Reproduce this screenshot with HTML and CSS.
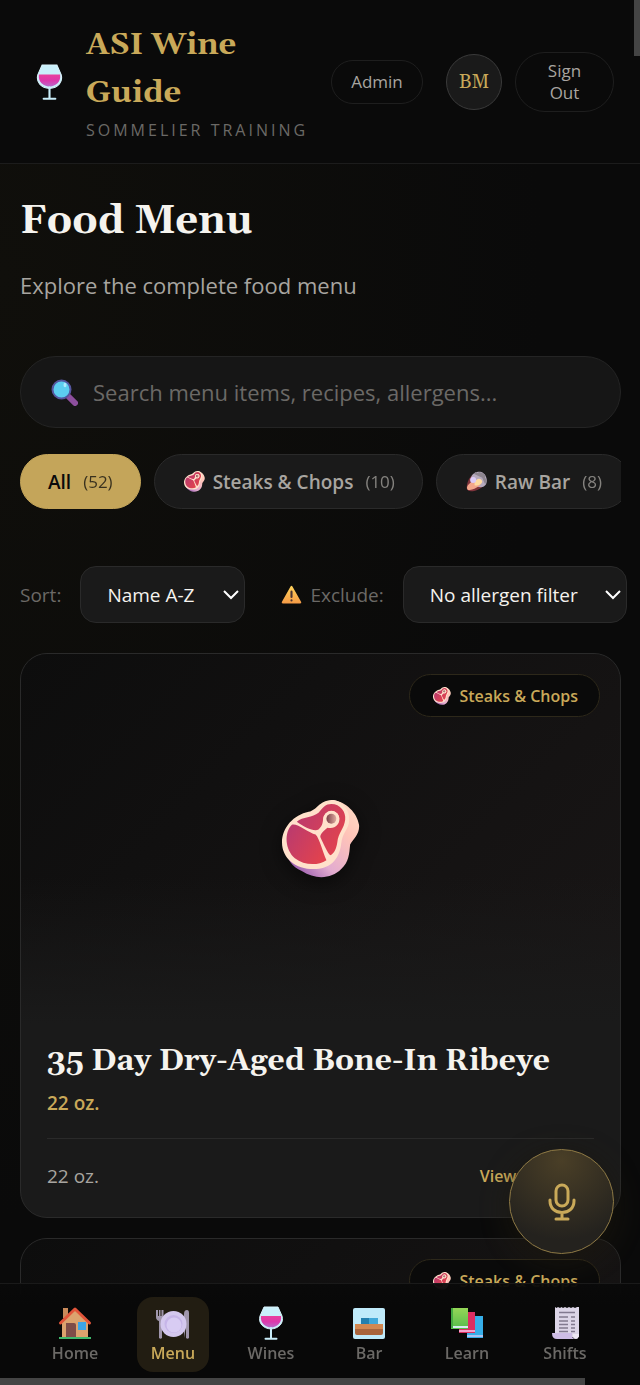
FILE: index.html
```html
<!DOCTYPE html>
<html lang="en">
<head>
  <meta charset="UTF-8">
  <meta name="viewport" content="width=device-width, initial-scale=1.0">
  <title>ASI Wine Guide - Food Menu</title>
  <link rel="stylesheet" href="styles.css">
</head>
<body>
  <!-- shared icons -->
  <svg class="sprite" aria-hidden="true">
    <defs>
      <linearGradient id="fatSide" x1="0" y1="1" x2="1" y2="0">
        <stop offset="0.1" stop-color="#9a5cae"/>
        <stop offset="0.35" stop-color="#e3acd0"/>
        <stop offset="0.7" stop-color="#ffc4b8"/>
        <stop offset="1" stop-color="#ffe0c8"/>
      </linearGradient>
      <linearGradient id="meat" x1="0" y1="0" x2="1" y2="0.6">
        <stop offset="0" stop-color="#b83a70"/>
        <stop offset="1" stop-color="#e0424f"/>
      </linearGradient>
      <linearGradient id="marrow" x1="0" y1="0" x2="1" y2="0">
        <stop offset="0" stop-color="#7b4048"/>
        <stop offset="1" stop-color="#e0aaa0"/>
      </linearGradient>
      <linearGradient id="wine" x1="0" y1="0" x2="0" y2="1">
        <stop offset="0" stop-color="#e9409f"/>
        <stop offset="0.5" stop-color="#dc38ac"/>
        <stop offset="1" stop-color="#b86acb"/>
      </linearGradient>
      <linearGradient id="green" x1="0" y1="0" x2="0" y2="1">
        <stop offset="0" stop-color="#95d657"/>
        <stop offset="1" stop-color="#55bd4c"/>
      </linearGradient>
      <linearGradient id="amber" x1="0" y1="0" x2="0" y2="1">
        <stop offset="0" stop-color="#ffd45c"/>
        <stop offset="1" stop-color="#f59a46"/>
      </linearGradient>
    </defs>
    <symbol id="steak" viewBox="11 10 79 79">
      <path fill="url(#fatSide)" d="M63 10C76 12 87 23 89 35C90 44 84 49 80 55C79 65 79 72 71 80C61 90 45 91 31 82C19 77 13 66 16 51Z"/>
      <path fill="#ffe1cb" d="M11 53C11 38 23 25 38 22C47 20 48 11 61 10C72 10 80 20 79 31C79 39 72 43 71 54C69 71 59 80 43 80C25 80 11 69 11 53Z"/>
      <path fill="url(#meat)" d="M26 32C32 27 42 28 48 23C53 17 55 14 61 14C70 14 76 22 75 30C74 39 68 43 67 53C66 59 64 64 60 66C57 64 53 54 50 48C49 45 53 41 57 38C64 40 70 35 69 28C68 20 57 19 53 27C52 32 53 35 48 40C43 42 34 38 26 32Z"/>
      <path fill="url(#meat)" d="M21 35C26 33 38 43 45 45C49 49 52 62 56 71C47 77 33 76 24 69C14 60 13 43 21 35Z"/>
      <circle cx="61" cy="29" r="8" fill="#ffe1cb"/>
      <circle cx="61" cy="29" r="5" fill="url(#marrow)"/>
    </symbol>
    <symbol id="glass" viewBox="0 0 24 34">
      <path fill="#c9f0fb" stroke="#d9f3fc" stroke-width="1" d="M5 1H19L23 10C25 17 20 22.500 12 23C4 22.500 -1 17 1 10Z"/>
      <path fill="url(#wine)" d="M2 10H22C23 17 18 21 12 21.500C6 21 1 17 2 10Z"/>
      <path fill="none" stroke="#c9edf9" stroke-width="2" stroke-linecap="round" d="M12 22V32M6.500 32.800H17.500"/>
    </symbol>
  </svg>

  <header class="header">
    <a class="brand" href="#">
      <svg class="brand-icon"><use href="#glass"/></svg>
      <span class="brand-text">
        <span class="brand-title">ASI Wine Guide</span>
        <span class="brand-sub">SOMMELIER TRAINING</span>
      </span>
    </a>
    <div class="header-actions">
      <button class="btn-ghost admin" type="button">Admin</button>
      <span class="avatar">BM</span>
      <button class="btn-ghost" type="button">Sign Out</button>
    </div>
  </header>

  <main class="page">
    <h1>Food Menu</h1>
    <p class="lead">Explore the complete food menu</p>

    <label class="search">
      <svg class="search-icon" viewBox="0 0 27 27">
        <path d="M17.500 17.500L24 24" stroke="#8d4f9d" stroke-width="6" stroke-linecap="round"/>
        <circle cx="10.500" cy="10.500" r="9" fill="#5ccdf0" stroke="#55569f" stroke-width="2"/>
        <ellipse cx="14" cy="6" rx="1.500" ry="2.200" fill="#aeeafd"/>
      </svg>
      <input type="text" aria-label="Search menu" placeholder="Search menu items, recipes, allergens...">
    </label>

    <div class="tabs">
      <button class="tab active" type="button">All <span class="count">(52)</span></button>
      <button class="tab" type="button">
        <svg class="icon"><use href="#steak"/></svg>Steaks &amp; Chops <span class="count">(10)</span>
      </button>
      <button class="tab" type="button">
        <svg class="icon" viewBox="0 0 22 22">
          <path fill="#7f343c" d="M1 19C0 14 3 7 7 4L20 13C18 18 9 22 3 21Z"/>
          <path fill="#b5a9bd" d="M5 8C6 2 12 0 16 1C21 3 23 9 21 14C18 19 11 17 7 13Z"/>
          <path fill="#8d858f" d="M8 3L10 1L12 2L14 1L17 2L20 4L20 7L22 10L20 14L17 7Z"/>
          <path fill="#f3a68a" d="M1 18C1 15 4 13 6 11C10 9 15 9 16 11C17 16 7 20 2 20Z"/>
          <path fill="#ffdb9f" d="M9 12C11 7 16 7 17 11C17 14 11 16 9 15Z"/>
          <circle cx="7.500" cy="9.500" r="3.200" fill="#dccbf7"/>
        </svg>Raw Bar <span class="count">(8)</span>
      </button>
    </div>

    <div class="filters">
      <div class="filter">
        <label for="sort">Sort:</label>
        <span class="select sort">
          <select id="sort"><option>Name A-Z</option><option>Name Z-A</option></select>
          <svg class="chevron" viewBox="0 0 16 10"><path d="M1 1L8 8L15 1"/></svg>
        </span>
      </div>
      <div class="filter">
        <label for="exclude">
          <svg class="icon" viewBox="0 0 22 22">
            <path fill="url(#amber)" d="M10 2.500Q11 1 12 2.500L21 18.500Q22 20 20 20.500H2Q0 20 1 18.500Z"/>
            <path fill="none" stroke="#4b3434" stroke-width="2.200" stroke-linecap="round" d="M11 8V13.500M11 17V17.200"/>
          </svg>Exclude:
        </label>
        <span class="select allergen">
          <select id="exclude"><option>No allergen filter</option><option>Dairy</option></select>
          <svg class="chevron" viewBox="0 0 16 10"><path d="M1 1L8 8L15 1"/></svg>
        </span>
      </div>
    </div>

    <div class="cards">
      <article class="card">
        <div class="card-image">
          <span class="badge"><svg class="badge-icon"><use href="#steak"/></svg>Steaks &amp; Chops</span>
          <svg class="card-icon"><use href="#steak"/></svg>
        </div>
        <div class="card-body">
          <h2>35 Day Dry-Aged Bone-In Ribeye</h2>
          <p class="price">22 oz.</p>
          <div class="card-footer">
            <span>22 oz.</span>
            <a href="#">View Details →</a>
          </div>
        </div>
      </article>
      <article class="card">
        <div class="card-image">
          <span class="badge"><svg class="badge-icon"><use href="#steak"/></svg>Steaks &amp; Chops</span>
        </div>
      </article>
    </div>
  </main>

  <button class="mic" type="button" aria-label="Voice assistant">
    <svg viewBox="0 0 28 38">
      <rect x="8" y="2" width="12" height="21" rx="6"/>
      <path d="M2 17V18C2 25 7 29.500 14 29.500C21 29.500 26 25 26 18V17M14 29.500V36M8 36H20"/>
    </svg>
  </button>

  <nav class="bottom-nav">
    <a href="#">
      <svg viewBox="0 0 34 34">
        <path fill="#c98a5a" d="M5 2H10V12H5Z"/>
        <path fill="#dca36e" d="M4 16L17 4L30 16V31H4Z"/>
        <path fill="#7f4d48" d="M8 17H16Q18 17 18 19V31H8Z"/>
        <path fill="#3ba4e6" d="M20 16H28V24H20Z"/>
        <path fill="none" stroke="#e2553a" stroke-width="3" stroke-linecap="round" stroke-linejoin="round" d="M2.500 17L17 3L31.500 17"/>
        <path fill="#3eb96b" d="M1 31H33V33H1Z"/>
      </svg>
      Home
    </a>
    <a href="#" class="active">
      <svg viewBox="0 0 34 34">
        <path fill="#a096ac" d="M0 4H2V10H3V4H4.500V10H5.500V4H7.500V12Q7.500 14 6 15V32Q4.500 33.500 3 32V15Q0 14 0 11Z"/>
        <path fill="#a096ac" d="M28 32V8Q28 4 31 4Q33 4 33 7V32Q31.500 33.500 30 32V20Z"/>
        <circle cx="17.500" cy="18" r="13" fill="#d4c8ee"/>
        <circle cx="17.500" cy="18" r="9" fill="#c6b5e8"/>
        <circle cx="18" cy="19" r="7.500" fill="#d8ccf3"/>
      </svg>
      Menu
    </a>
    <a href="#">
      <svg><use href="#glass"/></svg>
      Wines
    </a>
    <a href="#">
      <svg viewBox="0 0 34 34">
        <rect x="1" y="2" width="32" height="31" rx="2" fill="#bfeafa"/>
        <path fill="#a9643c" d="M3 18H31V27Q31 29 29 29H5Q3 29 3 27Z"/>
        <path fill="#d28851" d="M3 18H31V23H3Z"/>
        <path fill="#237fae" d="M9 12H18V18H9Z"/>
        <path fill="#42a8d8" d="M17 12H26V18H17Z"/>
      </svg>
      Bar
    </a>
    <a href="#">
      <svg viewBox="0 0 34 34">
        <path fill="#36aee9" d="M17 10H33V32H17Z"/>
        <path fill="#a9c2f4" d="M17 29H33V31H17Z"/>
        <path fill="#dc2e61" d="M9 6H25V27H9Z"/>
        <path fill="#f3a3ce" d="M9 24H25V26H9Z"/>
        <path fill="url(#green)" d="M1 2H18V23H1Z"/>
        <path fill="#d5edf0" d="M2 20H18V22H2Z"/>
        <path fill="#45aa42" d="M1 2H3V22H1Z"/>
      </svg>
      Learn
    </a>
    <a href="#">
      <svg viewBox="0 0 34 34">
        <path fill="#dcd5e7" d="M7 1L8.500 2L10 1L12 2L13.500 1L15 2L17 1L19 2L21 1L23 2L25 1L27 2L29 1L31 1V31H7Z"/>
        <path fill="#cdbce5" d="M4 27H24Q23 33 28 33H9Q4 33 4 27Z"/>
        <path fill="#eee8f5" d="M28 33Q31 33 31 28H25Q24 33 28 33Z"/>
        <path fill="none" stroke="#81798f" stroke-width="1.600" d="M11 6.500H27M11 11H20M23 11H27M11 15H20M23 15H27M11 18.500H20M23 18.500H27M11 22H20M23 22H27M11 25.500H20M23 25.500H27"/>
      </svg>
      Shifts
    </a>
  </nav>
  <div class="scroll-thumb vertical"></div>
  <div class="scroll-thumb horizontal"></div>
</body>
</html>
```
FILE: styles.css
```css
* {
  box-sizing: border-box;
}

body {
  display: flex;
  flex-direction: column;
  margin: 0;
  height: 100vh;
  overflow: hidden;
  font-family: "Open Sans", "Noto Sans", sans-serif;
  font-size: 19px;
  color: #f5f3ee;
  background: radial-gradient(ellipse at 0 20%, #100f0b 0, #0a0a0a 60%) #0a0a0a;
}

h1, h2, p {
  margin: 0;
}

a {
  color: inherit;
  text-decoration: none;
}

button, input, select {
  font-family: inherit;
  font-size: inherit;
  color: inherit;
}

button {
  cursor: pointer;
}

.sprite {
  position: absolute;
  width: 0;
  height: 0;
}

/* header */
.header {
  display: flex;
  flex-shrink: 0;
  align-items: center;
  justify-content: space-between;
  height: 164px;
  padding: 0 26px 0 36px;
  background: #0a0a0a;
  border-bottom: 1px solid #1c1c1c;
}

.brand {
  display: flex;
  align-items: center;
  gap: 23px;
}

.brand-icon {
  width: 27px;
  height: 36px;
}

.brand-text {
  display: flex;
  flex-direction: column;
  width: 232px;
}

.brand-title {
  width: 180px;
  font-family: Gelasio, Georgia, "Liberation Serif", serif;
  font-size: 31px;
  font-weight: 700;
  line-height: 48px;
  color: #c9a959;
}

.brand-sub {
  font-size: 16px;
  font-weight: 500;
  line-height: 26px;
  letter-spacing: 3px;
  white-space: nowrap;
  color: #6b6966;
}

.header-actions {
  display: flex;
  align-items: center;
}

.btn-ghost {
  width: 99px;
  padding: 7px 20px;
  font-size: 17px;
  line-height: 22px;
  color: #a8a5a0;
  background: none;
  border: 1px solid #1e1e1e;
  border-radius: 30px;
}

.btn-ghost.admin {
  width: 92px;
  padding: 10px 0;
  margin-right: 23px;
}

.avatar {
  display: flex;
  align-items: center;
  justify-content: center;
  width: 56px;
  height: 56px;
  margin-right: 13px;
  font-family: Gelasio, Georgia, "Liberation Serif", serif;
  font-size: 19px;
  color: #c9a959;
  background: #1a1a1a;
  border: 1px solid #3a3a3a;
  border-radius: 50%;
}

/* page */
.page {
  flex: 1;
  min-height: 0;
  padding: 30px 19px 0 20px;
  overflow: hidden;
}

h1 {
  font-family: Gelasio, Georgia, "Liberation Serif", serif;
  font-size: 40px;
  line-height: 56px;
}

.lead {
  margin-top: 17px;
  font-size: 22px;
  line-height: 36px;
  color: #a8a5a0;
}

.search {
  display: flex;
  align-items: center;
  gap: 15px;
  height: 72px;
  margin-top: 53px;
  padding: 0 30px;
  background: #161616;
  border: 1px solid #242424;
  border-radius: 36px;
}

.search-icon {
  width: 27px;
  height: 27px;
}

.search input {
  flex: 1;
  min-width: 0;
  padding: 0;
  font-size: 22px;
  background: none;
  border: none;
  outline: none;
}

.search input::placeholder {
  color: #6b6966;
}

.tabs {
  display: flex;
  gap: 13px;
  margin-top: 26px;
  overflow: hidden;
}

.tab {
  display: flex;
  flex-shrink: 0;
  align-items: center;
  height: 55px;
  padding: 0 27px;
  font-weight: 600;
  white-space: nowrap;
  color: #a8a5a0;
  background: #1a1a1a;
  border: 1px solid #2a2a2a;
  border-radius: 28px;
}

.tab .icon {
  margin: 0 8px 0 2px;
}

.tab.active {
  color: #0a0a0a;
  background: #c4a55a;
  border-color: #c4a55a;
}

.count {
  margin-left: 12px;
  font-size: 17px;
  font-weight: 500;
  opacity: 0.75;
}

.icon {
  width: 21px;
  height: 21px;
}

.filters {
  display: flex;
  gap: 36px;
  margin-top: 57px;
}

.filter {
  display: flex;
  flex-shrink: 0;
  align-items: center;
  gap: 19px;
}

.filter label {
  display: flex;
  align-items: center;
  gap: 8px;
  color: #6b6966;
}

.select {
  position: relative;
}

.select select {
  width: 100%;
  height: 57px;
  padding: 0 26px;
  appearance: none;
  background: #1a1a1a;
  border: 1px solid #2a2a2a;
  border-radius: 16px;
}

.sort {
  width: 165px;
}

.allergen {
  width: 224px;
}

.chevron {
  position: absolute;
  top: 24px;
  right: 6px;
  width: 16px;
  height: 10px;
  fill: none;
  stroke: #fff;
  stroke-width: 2;
  pointer-events: none;
}

/* cards */
.cards {
  display: flex;
  flex-direction: column;
  gap: 20px;
  margin-top: 30px;
}

.card {
  overflow: hidden;
  background: #1a1a1a;
  border: 1px solid #2a2a2a;
  border-radius: 27px;
}

.card-image {
  position: relative;
  display: flex;
  align-items: center;
  justify-content: center;
  height: 370px;
  background: linear-gradient(to bottom, transparent 60%, #1a1a1a), linear-gradient(135deg, #0d0d0d, #191616);
}

.badge {
  position: absolute;
  top: 20px;
  right: 20px;
  display: flex;
  align-items: center;
  gap: 8px;
  height: 43px;
  padding: 0 21px 0 23px;
  font-size: 16px;
  font-weight: 600;
  color: #c9a959;
  background: #0a0a0a;
  border: 1px solid #2d281a;
  border-radius: 22px;
}

.badge-icon {
  width: 18px;
  height: 18px;
}

.card-icon {
  width: 78px;
  height: 78px;
  filter: drop-shadow(0 5px 10px #0008);
}

.card-body {
  padding: 15px 26px 22px;
}

.card-body h2 {
  font-family: Gelasio, Georgia, "Liberation Serif", serif;
  font-size: 30px;
  line-height: 44px;
  white-space: nowrap;
}

.price {
  margin-top: 3px;
  line-height: 34px;
  font-weight: 600;
  color: #c9a959;
}

.card-footer {
  display: flex;
  align-items: center;
  justify-content: space-between;
  margin-top: 18px;
  padding-top: 18px;
  line-height: 38px;
  color: #a8a5a0;
  border-top: 1px solid #2a2a2a;
}

.card-footer a {
  font-size: 16px;
  font-weight: 600;
  color: #c9a959;
}

/* floating button */
.mic {
  position: fixed;
  right: 26px;
  bottom: 131px;
  display: flex;
  align-items: center;
  justify-content: center;
  width: 105px;
  height: 105px;
  background: radial-gradient(circle at 50% 10%, #4a3f27, #24221e 75%);
  border: 1px solid #8f7a45;
  border-radius: 50%;
  box-shadow: 0 8px 36px rgba(201, 169, 89, 0.1), 0 5px 26px #0008;
}

.mic svg {
  width: 28px;
  height: 38px;
  fill: none;
  stroke: #c9a959;
  stroke-width: 3;
  stroke-linecap: round;
}

/* bottom navigation */
.bottom-nav {
  position: fixed;
  left: 0;
  right: 0;
  bottom: 0;
  display: flex;
  height: 102px;
  padding: 13px 26px;
  background: linear-gradient(#0a0a0af4, #080808 20px);
  border-top: 1px solid #1a1a1a;
}

.bottom-nav a {
  display: flex;
  flex: 1;
  flex-direction: column;
  align-items: center;
  height: 75px;
  margin: 0 13px;
  padding-top: 9px;
  font-size: 16px;
  font-weight: 600;
  line-height: 26px;
  color: #6b6966;
  border-radius: 16px;
}

.bottom-nav a.active {
  color: #c9a959;
  background: #221d12;
}

.bottom-nav svg {
  width: 34px;
  height: 34px;
}

.scroll-thumb {
  position: fixed;
  background: #444;
}

.scroll-thumb.vertical {
  top: 0;
  right: 0;
  width: 6px;
  height: 56px;
}

.scroll-thumb.horizontal {
  left: 0;
  right: 55px;
  bottom: 0;
  height: 7px;
}
```
